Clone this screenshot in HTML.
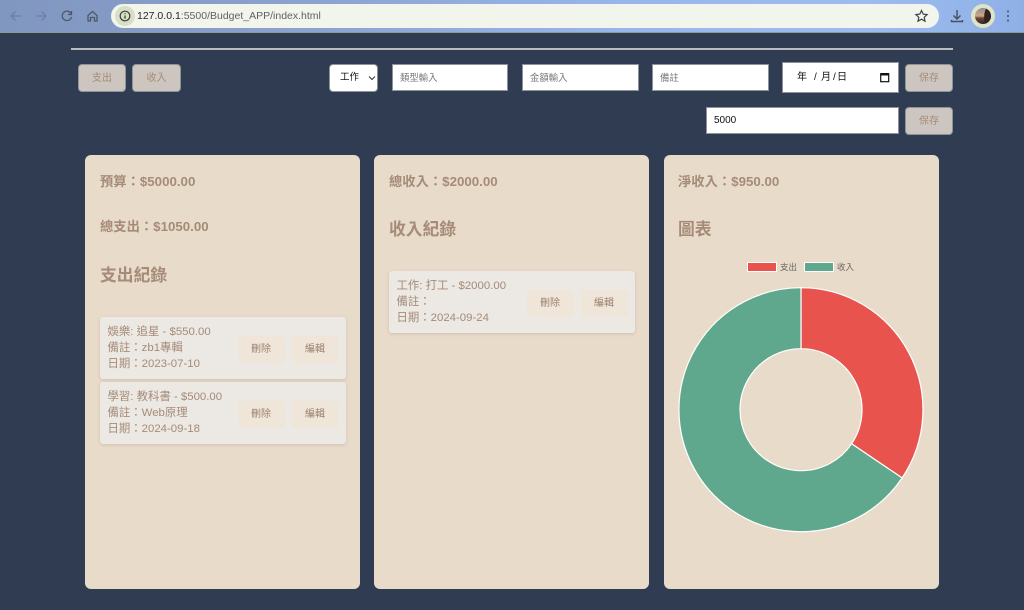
<!DOCTYPE html>
<html lang="zh-Hant"><head><meta charset="utf-8"><title>Budget</title>
<style>
*{box-sizing:border-box}
html,body{margin:0;padding:0}
body{width:1024px;height:610px;overflow:hidden;position:relative;background:#303c52;font-family:"Liberation Sans","Noto Sans CJK TC",sans-serif}
.a{position:absolute}
.bar{left:0;top:0;width:1024px;height:33px;background:linear-gradient(90deg,#8097c0 0%,#8a9fcb 25%,#97b5ea 60%,#9cbcf0 85%,#8fb0e6 100%);border-bottom:1px solid #8f9698}
.url{left:111px;top:4px;width:828px;height:24px;border-radius:12px;background:#f2f5ec}
.urlt{left:137px;top:9px;font-size:10.5px;line-height:14px;color:#5d6360;white-space:nowrap}
.urlt b{font-weight:400;color:#23272a}
.btn{background:#cdc6c0;border:1px solid #8f949b;border-radius:4px;color:#a58b78;font-size:10px;text-align:center;height:28px;line-height:28px}
.inp{background:#fff;border:1px solid #8d929b;height:27px;font-size:9.4px;line-height:25px;padding-left:7px;color:#777}
.card{background:#e9dbca;border-radius:6px;top:155px;width:275px;height:434px}
.s{font-size:13.3px;font-weight:700;color:#a58b78;white-space:nowrap;line-height:18px}
.h{font-size:16.8px;font-weight:700;color:#a58b78;white-space:nowrap;line-height:24px}
.item{background:#ece8e3;border-radius:3px;box-shadow:0 1px 3px rgba(120,100,80,.22);width:246px;height:62px}
.item .t{position:absolute;left:7.500px;top:7px;font-size:11.4px;line-height:16px;color:#a58b78;white-space:nowrap}
.item .b{position:absolute;top:19px;width:47px;height:27px;background:#efe5d9;border-radius:4px;color:#9c8370;font-size:10px;line-height:28px;text-align:center}
.d{font-size:10px;line-height:14px;color:#111}
</style></head><body>
<div class="a bar"></div>
<svg class="a" style="left:0;top:0" width="110" height="33" fill="none">
<path d="M21 16H11M15.500 11.500L11 16l4.500 4.500" stroke="#6c80a8" stroke-width="1.300"/>
<path d="M36 16h10M41.500 11.500L46 16l-4.500 4.500" stroke="#6c80a8" stroke-width="1.300"/>
<path d="M71 13.500A4.700 4.700 0 1 0 71.500 17M71.500 11v3.500H68" stroke="#4e5866" stroke-width="1.300"/>
<path d="M88 15.500L92.500 11.500 97 15.500V21H94.500V17.500H90.500V21H88Z" stroke="#4e5866" stroke-width="1.300"/>
</svg>
<div class="a url"></div>
<div class="a" style="left:115px;top:6px;width:20px;height:20px;border-radius:50%;background:#d7e0c6"></div>
<svg class="a" style="left:118px;top:9px" width="14" height="14" fill="none"><circle cx="7" cy="7" r="4.800" stroke="#3c4238" stroke-width="1.200"/><path d="M7 6.500v3.200M7 4.300v1" stroke="#3c4238" stroke-width="1.300"/></svg>
<div class="a urlt"><b>127.0.0.1</b>:5500/Budget_APP/index.html</div>
<svg class="a" style="left:905px;top:0" width="119" height="33" fill="none">
<defs><linearGradient id="av" x1="0" y1="0" x2="0" y2="1"><stop offset="0" stop-color="#8d8e9c"/><stop offset=".5" stop-color="#d0a77f"/><stop offset=".62" stop-color="#6b4a3a"/><stop offset="1" stop-color="#2e2422"/></linearGradient></defs>
<path d="M16.500 10.500l1.700 3.600 3.900.5-2.900 2.700.8 3.900-3.500-2-3.500 2 .8-3.900-2.900-2.700 3.900-.5z" stroke="#3e4448" stroke-width="1.200"/>
<path d="M52 10v9M48.500 15.500L52 19l3.500-3.500M46.500 20v1.500h11V20" stroke="#47505c" stroke-width="1.400"/>
<circle cx="78" cy="16" r="12" fill="#dfe3c8"/>
<circle cx="78" cy="16" r="8" fill="url(#av)"/>
<path d="M81 8.600A8 8 0 0 1 80 23.800C78.500 20 79 12 81 8.600Z" fill="#2e2320"/>
<circle cx="103" cy="11.500" r="1.100" fill="#56606e"/><circle cx="103" cy="16" r="1.100" fill="#56606e"/><circle cx="103" cy="20.500" r="1.100" fill="#56606e"/>
</svg>

<div class="a" style="left:71px;top:48px;width:882px;height:2px;background:#b9bcc0"></div>

<div class="a btn" style="left:78px;top:64px;width:48px">支出</div>
<div class="a btn" style="left:132px;top:64px;width:49px">收入</div>

<div class="a" style="left:329px;top:63.500px;width:49px;height:28px;background:#fff;border:1px solid #8d929b;border-radius:4px;color:#111;font-size:9.500px;line-height:26px;padding-left:10px">工作</div>
<svg class="a" style="left:368px;top:75px" width="8" height="6" fill="none"><path d="M1 1.500l3 3 3-3" stroke="#333" stroke-width="1"/></svg>
<div class="a inp" style="left:392px;top:64px;width:116px">類型輸入</div>
<div class="a inp" style="left:522px;top:64px;width:117px">金額輸入</div>
<div class="a inp" style="left:652px;top:64px;width:117px">備註</div>
<div class="a" style="left:782px;top:62px;width:117px;height:31px;background:#fff;border:1px solid #8d929b"></div>
<div class="a d" style="left:797px;top:71px">年</div>
<div class="a d" style="left:814px;top:71px">/</div>
<div class="a d" style="left:821px;top:71px">月</div>
<div class="a d" style="left:833px;top:71px">/</div>
<div class="a d" style="left:837px;top:71px">日</div>
<svg class="a" style="left:880px;top:72px" width="10" height="11" fill="none"><rect x=".7" y="1.700" width="8" height="8" stroke="#111" stroke-width="1.200"/><rect x=".7" y="1" width="8" height="2.500" fill="#111"/></svg>
<div class="a btn" style="left:905px;top:64px;width:48px">保存</div>
<div class="a inp" style="left:706px;top:107px;width:193px;color:#111;font-size:10px">5000</div>
<div class="a btn" style="left:905px;top:106.500px;width:48px">保存</div>

<div class="a card" style="left:85px"></div>
<div class="a card" style="left:374px"></div>
<div class="a card" style="left:664px"></div>

<div class="a s" style="left:100px;top:173px">預算：$5000.00</div>
<div class="a s" style="left:100px;top:218px">總支出：$1050.00</div>
<div class="a h" style="left:100px;top:264px">支出紀錄</div>
<div class="a item" style="left:100px;top:317px"><div class="t">娛樂: 追星 - $550.00<br>備註：zb1專輯<br>日期：2023-07-10</div><div class="b" style="left:137.500px">刪除</div><div class="b" style="left:191.500px">編輯</div></div>
<div class="a item" style="left:100px;top:382px"><div class="t">學習: 教科書 - $500.00<br>備註：Web原理<br>日期：2024-09-18</div><div class="b" style="left:137.500px">刪除</div><div class="b" style="left:191.500px">編輯</div></div>

<div class="a s" style="left:389px;top:173px">總收入：$2000.00</div>
<div class="a h" style="left:389px;top:218px">收入紀錄</div>
<div class="a item" style="left:389px;top:271px"><div class="t">工作: 打工 - $2000.00<br>備註：<br>日期：2024-09-24</div><div class="b" style="left:137.500px">刪除</div><div class="b" style="left:191.500px">編輯</div></div>

<div class="a s" style="left:678px;top:173px">淨收入：$950.00</div>
<div class="a h" style="left:678px;top:218px">圖表</div>

<div class="a" style="left:747px;top:262px;width:30px;height:10px;background:#e8534d;border:1px solid #fff"></div>
<div class="a" style="left:780px;top:261px;font-size:8.500px;line-height:12px;color:#666">支出</div>
<div class="a" style="left:804px;top:262px;width:30px;height:10px;background:#5fa88d;border:1px solid #fff"></div>
<div class="a" style="left:837px;top:261px;font-size:8.500px;line-height:12px;color:#666">收入</div>

<svg class="a" style="left:664px;top:275px" width="275" height="270" viewBox="664 275 275 270">
<path d="M801 287.700A122 122 0 0 1 902.100 477.900L851.600 443.800A61 61 0 0 0 801 348.700Z" fill="#e8534d" stroke="#fff" stroke-width="1.200" stroke-linejoin="round"/>
<path d="M902.100 477.900A122 122 0 1 1 801 287.700V348.700A61 61 0 1 0 851.600 443.800Z" fill="#5fa88d" stroke="#fff" stroke-width="1.200" stroke-linejoin="round"/>
</svg>
</body></html>
